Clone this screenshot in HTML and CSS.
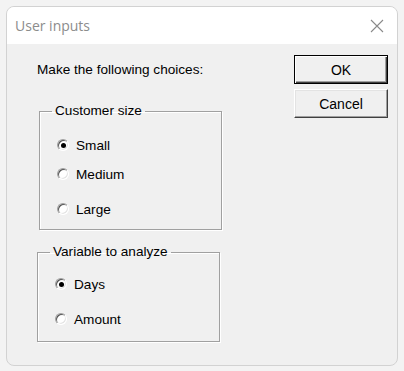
FILE: index.html
```html
<!DOCTYPE html>
<html lang="en">
<head>
  <meta charset="UTF-8" />
  <title>User inputs</title>
  <link rel="stylesheet" href="styles.css">
</head>
<body>
  <div class="window">
    <div class="titlebar">
      <span class="title">User inputs</span>
      <svg class="close" width="14" height="14" viewBox="0 0 14 14">
        <path d="M1 1 L13 13 M13 1 L1 13" stroke="#8a8a8a" stroke-width="1.1" fill="none"/>
      </svg>
    </div>

    <div class="content">
      <div class="left">
        <div class="prompt">Make the following choices:</div>

        <!-- Customer size -->
        <fieldset class="group group-size">
          <legend>Customer size</legend>
          <div class="option opt-1"><span class="radio checked"></span>Small</div>
          <div class="option opt-2"><span class="radio"></span>Medium</div>
          <div class="option opt-3"><span class="radio"></span>Large</div>
        </fieldset>

        <!-- Variable to analyze -->
        <fieldset class="group group-var">
          <legend>Variable to analyze</legend>
          <div class="option opt-a"><span class="radio checked"></span>Days</div>
          <div class="option opt-b"><span class="radio"></span>Amount</div>
        </fieldset>
      </div>

      <div class="buttons">
        <button type="button" class="btn default">OK</button>
        <button type="button" class="btn">Cancel</button>
      </div>
    </div>
  </div>
</body>
</html>
```

FILE: styles.css
```css
body {
  margin: 0;
  padding: 6px 0 0 6px;
  background-color: #f3f3f3;
  font-family: "Liberation Sans", Arial, sans-serif;
}

.window {
  width: 390px;
  height: 358px;
  border: 1px solid #d2d2d2;
  border-radius: 8px;
  overflow: hidden;
  background-color: #f0f0f0;
  display: flex;
  flex-direction: column;
}

.titlebar {
  height: 37px;
  background: #fff;
  display: flex;
  align-items: center;
  justify-content: space-between;
  padding: 0 13px 0 8px;
}

.title {
  font-family: "Open Sans", sans-serif;
  font-size: 14px;
  color: #8c8c8c;
}

.content {
  flex: 1;
  display: flex;
  padding: 11px 9px 0 0;
}

.left {
  flex: 1;
  display: flex;
  flex-direction: column;
}

.prompt {
  font-size: 13.6px;
  color: #000;
  margin: 7px 0 0 30px;
  line-height: 16px;
}

.group {
  border: 1px solid #a0a0a0;
  box-shadow: 1px 1px 0 #fff, inset 1px 1px 0 #fff;
  padding: 0;
  margin: 0;
  font-size: 13.6px;
  color: #000;
}

.group legend {
  margin-left: 12px;
  padding: 0 3px;
  line-height: 16px;
}

.group-size {
  width: 181px;
  height: 125px;
  margin: 25px 0 0 32px;
}

.group-var {
  width: 181px;
  height: 96px;
  margin: 14px 0 0 30px;
}

.option {
  display: flex;
  align-items: center;
  height: 20px;
  margin-left: 17px;
}

.opt-1 { margin-top: 16px; }
.opt-2 { margin-top: 9px; }
.opt-3 { margin-top: 15px; }
.opt-a { margin-top: 14px; }
.opt-b { margin-top: 15px; }

.radio {
  width: 10px;
  height: 10px;
  border-radius: 50%;
  background: #fff;
  border: 1px solid;
  border-color: #a0a0a0 #fff #fff #a0a0a0;
  box-shadow: inset 1px 1px 0 #555, inset -1px -1px 0 #e3e3e3;
  margin-right: 7px;
  display: flex;
  align-items: center;
  justify-content: center;
}

.radio.checked::after {
  content: "";
  width: 5px;
  height: 5px;
  border-radius: 50%;
  background: #000;
}

.buttons {
  display: flex;
  flex-direction: column;
  gap: 5px;
}

.btn {
  width: 94px;
  height: 29px;
  padding: 0;
  font-family: "Liberation Sans", Arial, sans-serif;
  font-size: 14px;
  color: #000;
  background-color: #f0f0f0;
  border: 1px solid;
  border-color: #fff #404040 #404040 #fff;
  box-shadow: inset -1px -1px 0 #a0a0a0, inset 1px 1px 0 #e3e3e3;
}

.btn.default {
  border: 1px solid #000;
  box-shadow: inset 1px 1px 0 #fff, inset -1px -1px 0 #404040, inset -2px -2px 0 #a0a0a0;
}
```
